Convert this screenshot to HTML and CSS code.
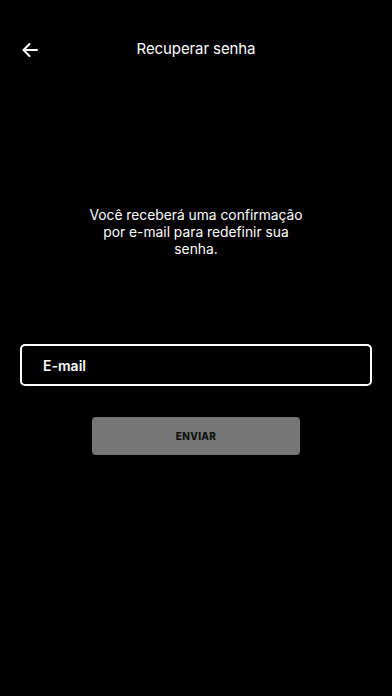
FILE: index.html
```html
<!DOCTYPE html>
<html>
<head>
  <meta charset="UTF-8">
  <link rel="stylesheet" href="styles.css">
</head>
<body>
  <div class="screen">
    <div class="header">
      <span class="back-btn">
        <svg width="16" height="14" viewBox="0 0 16 14">
          <path d="M15 7H1.5M7.5 1L1.5 7l6 6" fill="none" stroke="#fff" stroke-width="2" stroke-linecap="round" stroke-linejoin="round"/>
        </svg>
      </span>
      <div class="title">Recuperar senha</div>
    </div>
    <p class="info">Você receberá uma confirmação por e-mail para redefinir sua senha.</p>
    <div class="field">
      <input type="text" id="email-input" placeholder="E-mail">
    </div>
    <div class="actions">
      <button id="send-btn">ENVIAR</button>
    </div>
  </div>
</body>
</html>
```

FILE: styles.css
```css
body {
  margin: 0;
  background: #000;
  color: #fff;
  font-family: Inter, "Noto Sans", sans-serif;
}
.screen {
  height: 696px;
  padding: 0 20px;
}
.header {
  display: flex;
  align-items: center;
  justify-content: center;
  height: 48px;
  padding-top: 24px;
  position: relative;
}
.back-btn {
  position: absolute;
  left: 2px;
  top: 41px;
  cursor: pointer;
}
.title {
  font-size: 15px;
  letter-spacing: -0.1px;
}
.info {
  width: 228px;
  margin: 135px auto 0;
  text-align: center;
  font-size: 13.8px;
  line-height: 17px;
}
.field {
  margin-top: 86px;
}
#email-input {
  width: 100%;
  box-sizing: border-box;
  height: 42px;
  padding: 0 21px;
  background: #000;
  border: 2px solid #fff;
  border-radius: 5px;
  color: #fff;
  font-family: Inter, sans-serif;
  font-size: 14px;
  font-weight: 600;
  outline: none;
}
#email-input::placeholder {
  color: #fff;
}
.actions {
  display: flex;
  justify-content: center;
  margin-top: 31px;
}
button {
  width: 208px;
  height: 38px;
  background: #767676;
  color: #111;
  border: none;
  border-radius: 4px;
  font-family: Inter, sans-serif;
  font-size: 10px;
  font-weight: 800;
  letter-spacing: 0.3px;
  cursor: pointer;
}
```
